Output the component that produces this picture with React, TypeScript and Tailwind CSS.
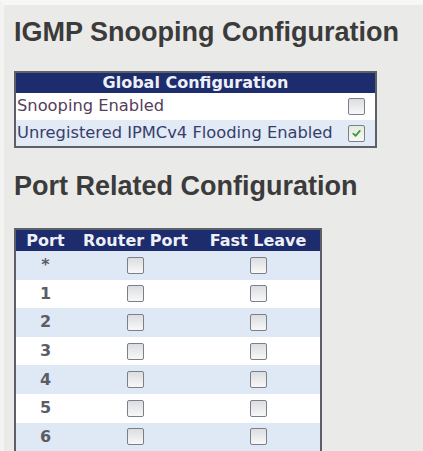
import React from "react";

const PORTS = ["*", "1", "2", "3", "4", "5", "6"];

function CheckBox({ checked = false }: { checked?: boolean }) {
  return (
    <span
      className={
        "inline-flex h-[17px] w-[17px] items-center justify-center rounded-[2px] border-[1.5px] border-[#7a7f8a] " +
        (checked
          ? "bg-gradient-to-b from-[#e4eadf] to-[#f7faf4]"
          : "bg-gradient-to-b from-[#dcdde0] to-[#f8f8f8]")
      }
    >
      {checked && (
        <svg viewBox="0 0 12 12" className="h-[11px] w-[11px]">
          <path d="M2.5 6.2 L5 8.6 L9.6 3.2" fill="none" stroke="#3d9a3a" strokeWidth="1.9" strokeLinecap="round" strokeLinejoin="round" />
        </svg>
      )}
    </span>
  );
}

export default function App() {
  return (
    <div className="min-h-[451px] border-l-[4px] border-t-[5px] border-l-[#f3f3f2] border-t-[#f7f7f6] bg-[#eaeae8] pl-[10px] font-['DejaVu_Sans',sans-serif]">
      <h1 className="mt-[12px] font-['Liberation_Sans',Arial,sans-serif] text-[27px] font-bold leading-[31px] text-[#3b3b3b]">
        IGMP Snooping Configuration
      </h1>

      {/* global settings */}
      <div className="mt-[23px] w-[363px] border-2 border-[#5e6068] bg-white text-[16.3px]">
        <div className="flex h-[20px] items-center justify-center bg-[#1d2c6c] text-[16px] font-bold leading-none text-[#eef0f8]">
          Global Configuration
        </div>
        <div className="flex h-[27px] items-center justify-between bg-white pl-[1px] pr-[10px]">
          <span className="text-[#56405a]">Snooping Enabled</span>
          <CheckBox />
        </div>
        <div className="flex h-[26px] items-center justify-between bg-[#e1eaf5] pl-[1px] pr-[10px]">
          <span className="text-[#383e6a]">Unregistered IPMCv4 Flooding Enabled</span>
          <CheckBox checked />
        </div>
      </div>

      <h1 className="mt-[23px] font-['Liberation_Sans',Arial,sans-serif] text-[27px] font-bold leading-[31px] text-[#3b3b3b]">
        Port Related Configuration
      </h1>

      {/* per-port settings */}
      <div className="mt-[26px] w-[308px] border-2 border-b-0 border-[#5e6068] bg-white text-[16px]">
        <div className="grid h-[21px] grid-cols-[59px_121px_124px] items-center bg-[#1d2c6c] text-[16px] font-bold leading-none text-[#eef0f8]">
          <span className="text-center">Port</span>
          <span className="text-center">Router Port</span>
          <span className="text-center">Fast Leave</span>
        </div>
        {PORTS.map((p, i) => (
          <div
            key={p}
            className={
              "grid h-[28.6px] grid-cols-[59px_121px_124px] items-center " +
              (i % 2 === 0 ? "bg-[#dfe9f5]" : "bg-white")
            }
          >
            <span className="text-center font-bold text-[#5b5d66]">{p}</span>
            <span className="flex justify-center">
              <CheckBox />
            </span>
            <span className="flex justify-center">
              <CheckBox />
            </span>
          </div>
        ))}
      </div>
    </div>
  );
}
